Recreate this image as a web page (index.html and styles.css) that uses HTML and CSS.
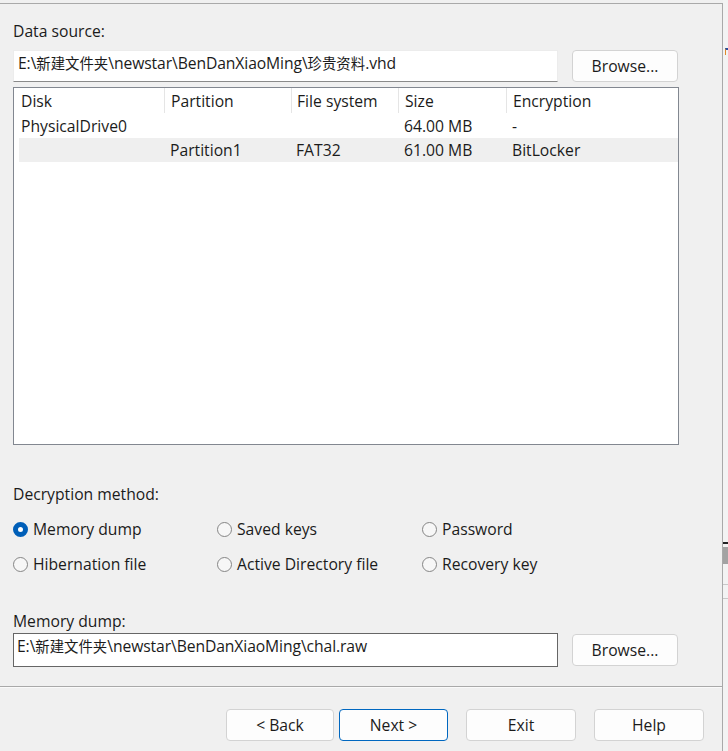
FILE: index.html
```html
<!DOCTYPE html>
<html lang="en">
<head>
    <meta charset="UTF-8">
    <title>BitLocker decryption</title>
    <link rel="stylesheet" href="styles.css">
</head>
<body>

<div class="screen">
    <div class="dialog">
        <div class="label first">Data source:</div>
        <div class="path-row">
            <div class="path-box">E:\<span class="cjk">新建文件夹</span>\newstar\BenDanXiaoMing\<span class="cjk">珍贵资料</span>.vhd</div>
            <button class="btn browse">Browse...</button>
        </div>

        <!-- ディスク一覧 -->
        <div class="disk-list">
            <div class="list-head">
                <div class="col c-disk">Disk</div>
                <div class="col c-part">Partition</div>
                <div class="col c-fs">File system</div>
                <div class="col c-size">Size</div>
                <div class="col c-enc">Encryption</div>
            </div>
            <div class="list-row">
                <div class="col c-disk">PhysicalDrive0</div>
                <div class="col c-part"></div>
                <div class="col c-fs"></div>
                <div class="col c-size">64.00 MB</div>
                <div class="col c-enc">-</div>
            </div>
            <div class="list-row selected">
                <div class="col c-disk"></div>
                <div class="col c-part">Partition1</div>
                <div class="col c-fs">FAT32</div>
                <div class="col c-size">61.00 MB</div>
                <div class="col c-enc">BitLocker</div>
            </div>
        </div>

        <div class="label method">Decryption method:</div>
        <div class="radio-grid">
            <div class="radio checked"><span class="dot"></span>Memory dump</div>
            <div class="radio"><span class="dot"></span>Saved keys</div>
            <div class="radio"><span class="dot"></span>Password</div>
            <div class="radio"><span class="dot"></span>Hibernation file</div>
            <div class="radio"><span class="dot"></span>Active Directory file</div>
            <div class="radio"><span class="dot"></span>Recovery key</div>
        </div>

        <div class="label dump">Memory dump:</div>
        <div class="path-row dump-row">
            <div class="path-box classic">E:\<span class="cjk">新建文件夹</span>\newstar\BenDanXiaoMing\chal.raw</div>
            <button class="btn browse">Browse...</button>
        </div>

        <div class="footer">
            <button class="btn nav back">&lt; Back</button>
            <button class="btn nav default">Next &gt;</button>
            <button class="btn nav spaced">Exit</button>
            <button class="btn nav spaced">Help</button>
        </div>
    </div>

    <!-- 後ろのウィンドウの端 -->
    <div class="behind">
        <div class="glyph"></div>
        <div class="bar-dark"></div>
        <div class="bar-gray"></div>
        <div class="rule one"></div>
        <div class="rule two"></div>
    </div>
</div>

</body>
</html>
```

FILE: styles.css
```css
/* 全体 */
body {
    margin: 0;
    background: #f0f0f0;
    font-family: "Segoe UI", "Open Sans", "Noto Sans CJK SC", sans-serif;
    font-size: 15.7px;
    color: #1b1b1b;
}

.screen {
    display: flex;
    width: 728px;
    height: 751px;
    overflow: hidden;
}

/* ダイアログ本体 */
.dialog {
    width: 723px;
    height: 748px;
    margin-top: 3px;
    border-top: 1px solid #a9a9a9;
    border-right: 1px solid #a9a9a9;
    box-sizing: border-box;
    padding: 0 0 0 13px;
    background: #f0f0f0;
    flex: none;
}

.label {
    height: 20px;
    line-height: 20px;
}

.label.first {
    margin-top: 17px;
}

.path-row {
    display: flex;
    align-items: flex-start;
    margin-top: 9px;
    width: 665px;
}

.path-box {
    width: 545px;
    height: 32px;
    box-sizing: border-box;
    background: #fff;
    border: 1px solid #ececec;
    border-bottom-color: #8a8a8a;
    padding: 1px 0 0 4px;
    line-height: 22px;
    white-space: nowrap;
    overflow: hidden;
    letter-spacing: -0.1px;
}

/* 中国語部分は少し小さめ */
.cjk {
    font-size: 14.4px;
    letter-spacing: 0;
}

.path-box.classic {
    height: 34px;
    border: 1px solid #666;
    padding: 1px 0 0 3px;
}

/* ボタン */
.btn {
    font: inherit;
    color: #1b1b1b;
    background: #fdfdfd;
    border: 1px solid #d3d3d3;
    border-radius: 4px;
    box-sizing: border-box;
    padding: 0;
    height: 32px;
}

.browse {
    width: 106px;
    margin-left: 14px;
}

.dump-row .browse {
    margin-top: 1px;
}

/* ディスク一覧 */
.disk-list {
    margin-top: 5px;
    width: 666px;
    height: 358px;
    box-sizing: border-box;
    border: 1px solid #828790;
    background: #fff;
}

.list-head, .list-row {
    display: flex;
}

.list-head {
    height: 26px;
    line-height: 26px;
}

.list-head .col {
    border-right: 1px solid #e5e5e5;
    height: 25px;
}

.list-head .c-enc {
    border-right: none;
}

.list-row {
    height: 24px;
    line-height: 24px;
    margin-left: 5px;
}

.list-row .c-disk {
    width: 145px;
    padding-left: 2px;
}

.list-row.selected {
    background: #efefef;
}

.col {
    box-sizing: border-box;
    padding-left: 7px;
    white-space: nowrap;
}

.c-disk { width: 151px; }
.c-part { width: 127px; padding-left: 6px; }
.c-fs   { width: 107px; padding-left: 5px; }
.c-size { width: 108px; padding-left: 6px; }
.c-enc  { width: 171px; padding-left: 6px; }

/* 復号方式 */
.label.method {
    margin-top: 39px;
}

.radio-grid {
    display: grid;
    grid-template-columns: 204px 205px 200px;
    row-gap: 15px;
    margin-top: 15px;
}

.radio {
    display: flex;
    align-items: center;
    height: 20px;
    white-space: nowrap;
}

.dot {
    width: 15px;
    height: 15px;
    box-sizing: border-box;
    border: 1px solid #858585;
    border-radius: 50%;
    background: #f7f7f7;
    margin-right: 5px;
    flex: none;
}

.radio.checked .dot {
    background: #fff;
    border: 5px solid #005fb8;
}

.label.dump {
    margin-top: 37px;
}

.dump-row {
    margin-top: 2px;
}

/* 下部ボタン */
.footer {
    margin: 19px 0 0 -13px;
    border-top: 1px solid #a9a9a9;
    box-shadow: inset 0 1px 0 #fafafa;
    padding: 22px 18px 0 0;
    display: flex;
    justify-content: flex-end;
}

.nav {
    width: 110px;
}

.nav.back {
    width: 108px;
}

.nav.default {
    width: 109px;
    margin-left: 5px;
    border-color: #0067c0;
}

.nav.spaced {
    margin-left: 18px;
}

/* 後ろのウィンドウ */
.behind {
    flex: 1;
    background: #f3f3f3;
}

.glyph {
    margin: 48px 0 0 2px;
    width: 3px;
    height: 5px;
    border-top: 2px solid #2a4fa0;
    border-left: 1px solid #e08a2a;
}

.bar-dark {
    margin-top: 487px;
    height: 2px;
    background: #222;
}

.bar-gray {
    margin-top: 3px;
    height: 17px;
    background: #a3a3a3;
}

.rule {
    height: 1px;
    background: #c8c8c8;
}

.rule.one { margin-top: 20px; }
.rule.two { margin-top: 13px; }
```
